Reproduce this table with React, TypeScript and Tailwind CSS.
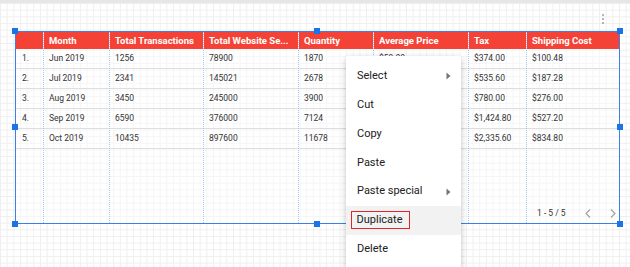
import React from "react";

const cols = [
  { w: "w-[27px]", h: "" },
  { w: "w-[66px]", h: "Month" },
  { w: "w-[94px]", h: "Total Transactions" },
  { w: "w-[95px]", h: "Total Website Se..." },
  { w: "w-[75px]", h: "Quantity" },
  { w: "w-[95px]", h: "Average Price" },
  { w: "w-[58px]", h: "Tax" },
  { w: "w-[93px]", h: "Shipping Cost" },
];

const rows = [
  ["1.", "Jun 2019", "1256", "78900", "1870", "$59.00", "$374.00", "$100.48"],
  ["2.", "Jul 2019", "2341", "145021", "2678", "$57.20", "$535.60", "$187.28"],
  ["3.", "Aug 2019", "3450", "245000", "3900", "$65.00", "$780.00", "$276.00"],
  ["4.", "Sep 2019", "6590", "376000", "7124", "$57.00", "$1,424.80", "$527.20"],
  ["5.", "Oct 2019", "10435", "897600", "11678", "$55.15", "$2,335.60", "$834.80"],
];

const Handle = ({ cls }: { cls: string }) => (
  <div className={`absolute w-[6px] h-[6px] bg-[#1a73e8] ${cls}`} />
);

const Arrow = () => (
  <svg width="5" height="8" viewBox="0 0 5 8" className="ml-auto mr-[10px]">
    <path d="M0.5 0.5 L4.5 4 L0.5 7.5 Z" fill="#757575" />
  </svg>
);

export default function App() {
  const items = ["Select", "Cut", "Copy", "Paste", "Paste special", "Duplicate", "Delete"];
  return (
    <div className="w-[630px] h-[267px] overflow-hidden relative bg-white font-['Roboto',sans-serif]">
      <div className="h-[3px] bg-[#e6e6e6]" />
      <div className="h-[264px] pl-[15px] pt-[28px] bg-[linear-gradient(to_right,#efefef_1px,transparent_1px),linear-gradient(to_bottom,#efefef_1px,transparent_1px)] bg-[size:6.67px_6.67px]">
        <div className="relative w-[605px] h-[193px] border border-[#3d7fe6] bg-white/40">
          <div className="flex h-full">
            {cols.map((c, ci) => (
              <div
                key={ci}
                className={`${c.w} shrink-0 flex flex-col h-full ${ci > 0 ? "border-l border-dotted border-[#a9c8f8]" : ""}`}
              >
                <div className="h-[17px] bg-[#f44336] text-white font-bold text-[9.5px] leading-[17px] pl-[5px] whitespace-nowrap overflow-hidden">
                  {c.h}
                </div>
                {rows.map((r, ri) => (
                  <div
                    key={ri}
                    className={`h-[20px] border-b border-[#dedede] text-[8.5px] leading-[19px] text-[#333] whitespace-nowrap ${ci === 0 ? "pl-[6px]" : "pl-[5px]"}`}
                  >
                    {r[ci]}
                  </div>
                ))}
              </div>
            ))}
          </div>
          <div className="absolute left-[521px] top-[175px] flex items-center h-[12px] text-[8.5px] text-[#333]">
            <span>1 - 5 / 5</span>
            <svg width="6" height="9" viewBox="0 0 6 9" className="ml-[19px]">
              <path d="M5 0.5 L1 4.5 L5 8.5" fill="none" stroke="#9e9e9e" strokeWidth="1.1" />
            </svg>
            <svg width="6" height="9" viewBox="0 0 6 9" className="ml-[19px]">
              <path d="M1 0.5 L5 4.5 L1 8.5" fill="none" stroke="#9e9e9e" strokeWidth="1.1" />
            </svg>
          </div>
          <Handle cls="left-[-4px] top-[-4px]" />
          <Handle cls="left-[298px] top-[-4px]" />
          <Handle cls="right-[-4px] top-[-4px]" />
          <Handle cls="left-[-4px] top-[92px]" />
          <Handle cls="right-[-4px] top-[92px]" />
          <Handle cls="left-[-4px] bottom-[-4px]" />
          <Handle cls="left-[298px] bottom-[-4px]" />
          <Handle cls="right-[-4px] bottom-[-4px]" />
        </div>
      </div>
      <div className="absolute left-[602px] top-[14px] flex flex-col gap-[2px]">
        <div className="w-[2px] h-[2px] rounded-full bg-[#9e9e9e]" />
        <div className="w-[2px] h-[2px] rounded-full bg-[#9e9e9e]" />
        <div className="w-[2px] h-[2px] rounded-full bg-[#9e9e9e]" />
      </div>
      <div className="absolute left-[346px] top-[56px] w-[115px] h-[230px] bg-white rounded-[2px] shadow-[0_2px_6px_rgba(0,0,0,0.25)] pt-[6px]">
        {items.map((it) => (
          <div
            key={it}
            className={`h-[28.8px] flex items-center pl-[11px] text-[11px] text-[#212121] ${it === "Duplicate" ? "bg-[#f2f2f2]" : ""}`}
          >
            {it === "Duplicate" ? (
              <span className="-ml-[6px] h-[18px] flex items-center pl-[4.5px] pr-[7px] border-[1.5px] border-[#e0262b]">
                {it}
              </span>
            ) : (
              <span>{it}</span>
            )}
            {(it === "Select" || it === "Paste special") && <Arrow />}
          </div>
        ))}
      </div>
    </div>
  );
}
